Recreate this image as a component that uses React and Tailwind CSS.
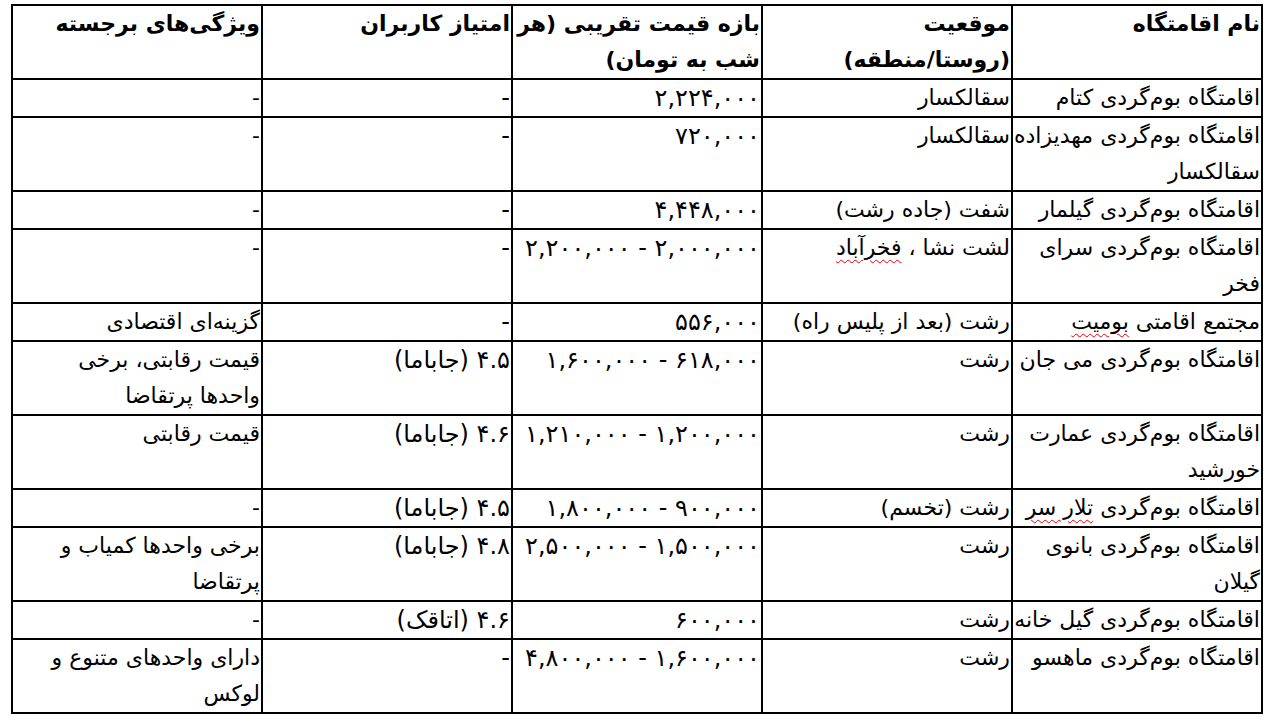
import React from 'react'

const headers = [
  ['نام اقامتگاه'],
  ['موقعیت', '(روستا/منطقه)'],
  ['بازه قیمت تقریبی (هر', 'شب به تومان)'],
  ['امتیاز کاربران'],
  ['ویژگی‌های برجسته'],
]

function Wavy({ children }) {
  return (
    <span className="underline decoration-wavy decoration-red-600 decoration-1 underline-offset-4">
      {children}
    </span>
  )
}

// each cell is a list of lines
const rows = [
  [['اقامتگاه بوم‌گردی کتام'], ['سقالکسار'], ['۲,۲۲۴,۰۰۰'], ['-'], ['-']],
  [['اقامتگاه بوم‌گردی مهدیزاده', 'سقالکسار'], ['سقالکسار'], ['۷۲۰,۰۰۰'], ['-'], ['-']],
  [['اقامتگاه بوم‌گردی گیلمار'], ['شفت (جاده رشت)'], ['۴,۴۴۸,۰۰۰'], ['-'], ['-']],
  [
    ['اقامتگاه بوم‌گردی سرای', 'فخر'],
    [<>لشت نشا ، <Wavy>فخرآباد</Wavy></>],
    ['۲,۰۰۰,۰۰۰ - ۲,۲۰۰,۰۰۰'],
    ['-'],
    ['-'],
  ],
  [
    [<>مجتمع اقامتی <Wavy>بومیت</Wavy></>],
    ['رشت (بعد از پلیس راه)'],
    ['۵۵۶,۰۰۰'],
    ['-'],
    ['گزینه‌ای اقتصادی'],
  ],
  [
    ['اقامتگاه بوم‌گردی می جان'],
    ['رشت'],
    ['۶۱۸,۰۰۰ - ۱,۶۰۰,۰۰۰'],
    ['۴.۵ (جاباما)'],
    ['قیمت رقابتی، برخی', 'واحدها پرتقاضا'],
  ],
  [
    ['اقامتگاه بوم‌گردی عمارت', 'خورشید'],
    ['رشت'],
    ['۱,۲۰۰,۰۰۰ - ۱,۲۱۰,۰۰۰'],
    ['۴.۶ (جاباما)'],
    ['قیمت رقابتی'],
  ],
  [
    [<>اقامتگاه بوم‌گردی <Wavy>تلار سر</Wavy></>],
    ['رشت (تخسم)'],
    ['۹۰۰,۰۰۰ - ۱,۸۰۰,۰۰۰'],
    ['۴.۵ (جاباما)'],
    ['-'],
  ],
  [
    ['اقامتگاه بوم‌گردی بانوی', 'گیلان'],
    ['رشت'],
    ['۱,۵۰۰,۰۰۰ - ۲,۵۰۰,۰۰۰'],
    ['۴.۸ (جاباما)'],
    ['برخی واحدها کمیاب و', 'پرتقاضا'],
  ],
  [['اقامتگاه بوم‌گردی گیل خانه'], ['رشت'], ['۶۰۰,۰۰۰'], ['۴.۶ (اتاقک)'], ['-']],
  [
    ['اقامتگاه بوم‌گردی ماهسو'],
    ['رشت'],
    ['۱,۶۰۰,۰۰۰ - ۴,۸۰۰,۰۰۰'],
    ['-'],
    ['دارای واحدهای متنوع و', 'لوکس'],
  ],
]

function Cell({ lines, head, col }) {
  let size = 'text-[22px]'
  if (head) size = 'font-bold text-[22px] tracking-[-0.3px]'
  else if (col === 2) size = 'text-[24px] tracking-[1px]'
  else if (col === 3) size = 'text-[24px]'
  return (
    <div
      className={`border-r-2 border-b-2 border-black pr-[1px] text-right leading-[36px] whitespace-nowrap overflow-hidden ${size}`}
    >
      {lines.map((line, i) => (
        <div key={i}>{line}</div>
      ))}
    </div>
  )
}

export default function App() {
  return (
    <div className="min-h-screen w-[1268px] bg-white text-black pt-[4px] pl-[11px] font-['DejaVu_Sans',sans-serif]">
      <div
        dir="rtl"
        className="grid grid-cols-[repeat(5,250px)] w-[1252px] border-l-2 border-t-2 border-black"
      >
        {headers.map((h, i) => (
          <Cell key={i} lines={h} head />
        ))}
        {rows.map((row, r) =>
          row.map((c, i) => <Cell key={`${r}-${i}`} lines={c} col={i} />)
        )}
      </div>
    </div>
  )
}
